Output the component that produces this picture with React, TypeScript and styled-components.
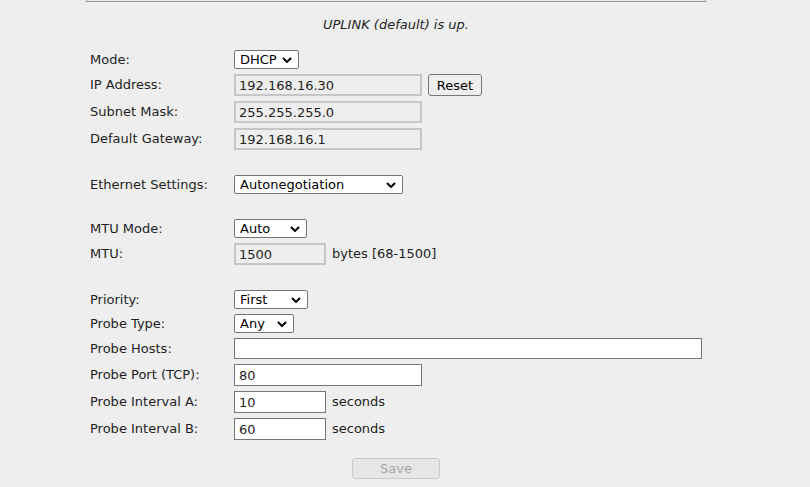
import React from 'react';
import styled, { createGlobalStyle } from 'styled-components';

const GlobalStyle = createGlobalStyle`
  html, body {
    margin: 0;
    padding: 0;
    background: #eeeeee;
  }
  body {
    font-family: 'DejaVu Sans', Verdana, sans-serif;
    font-size: 13px;
    color: #1e1e1e;
  }
`;

const Page = styled.div`
  width: 620px;
  margin-left: 86px;
`;

const TopEdge = styled.div`
  height: 1px;
  border: 1px solid #9a9a9a;
  border-top: none;
`;

const Status = styled.div`
  padding-top: 15px;
  line-height: 16px;
  text-align: center;
  font-style: italic;
`;

const Form = styled.form`
  margin-top: 17px;
  display: flex;
  flex-direction: column;
  gap: 25px;
`;

const Section = styled.div`
  display: grid;
  grid-template-columns: 144px 1fr;
  row-gap: 5px;
  align-items: center;
  padding-left: 4px;
`;

const Label = styled.label`
  line-height: 16px;
`;

const Controls = styled.div`
  display: flex;
  align-items: center;
  gap: 6px;
`;

const TextInput = styled.input<{ $w: number; $h?: number }>`
  box-sizing: border-box;
  width: ${(p) => p.$w}px;
  height: ${(p) => p.$h ?? 22}px;
  margin: 0;
  padding: 0 4px;
  font-family: 'DejaVu Sans', Verdana, sans-serif;
  font-size: 13px;
  color: #1e1e1e;
  background: #ffffff;
  border: 1px solid #767676;
  border-radius: 0;
  outline: none;

  &:disabled {
    padding: 0 3px;
    background: #eeeeee;
    border: 2px solid #c6c6c6;
    color: #1e1e1e;
    -webkit-text-fill-color: #1e1e1e;
  }
`;

const SelectWrap = styled.div<{ $w: number }>`
  position: relative;
  width: ${(p) => p.$w}px;
  height: 19px;
`;

const NativeSelect = styled.select`
  appearance: none;
  -webkit-appearance: none;
  box-sizing: border-box;
  width: 100%;
  height: 100%;
  margin: 0;
  padding: 0 20px 0 5px;
  font-family: 'DejaVu Sans', Verdana, sans-serif;
  font-size: 13px;
  color: #000;
  background: #ffffff;
  border: 1px solid #767676;
  border-radius: 2px;
  outline: none;
`;

const Chevron = styled.svg`
  position: absolute;
  right: 7px;
  top: 7px;
  pointer-events: none;
`;

const Button = styled.button<{ $w: number }>`
  box-sizing: border-box;
  width: ${(p) => p.$w}px;
  height: 22px;
  margin: 0;
  padding: 0;
  font-family: 'DejaVu Sans', Verdana, sans-serif;
  font-size: 13px;
  color: #000;
  background: #efefef;
  border: 1px solid #767676;
  border-radius: 3px;

  &:disabled {
    height: 21px;
    color: #a8a8a8;
    background: #e6e6e6;
    border-color: #c9c9c9;
  }
`;

const Unit = styled.span`
  line-height: 16px;
`;

const Footer = styled.div`
  display: flex;
  justify-content: center;
  margin-top: 18px;
`;

function Select({ width, value, options }: { width: number; value: string; options: string[] }) {
  return (
    <SelectWrap $w={width}>
      <NativeSelect defaultValue={value}>
        {options.map((o) => (
          <option key={o}>{o}</option>
        ))}
      </NativeSelect>
      <Chevron width="10" height="6" viewBox="0 0 10 6">
        <path d="M1 1 L5 5 L9 1" fill="none" stroke="#000" strokeWidth="2" />
      </Chevron>
    </SelectWrap>
  );
}

export default function App() {
  return (
    <>
      <GlobalStyle />
      <Page>
        <TopEdge />
        <Status>UPLINK (default) is up.</Status>
        <Form onSubmit={(e) => e.preventDefault()}>
          <Section>
            <Label>Mode:</Label>
            <Controls>
              <Select width={65} value="DHCP" options={['DHCP', 'Static']} />
            </Controls>
            <Label>IP Address:</Label>
            <Controls>
              <TextInput $w={188} defaultValue="192.168.16.30" disabled />
              <Button $w={54} type="button">Reset</Button>
            </Controls>
            <Label>Subnet Mask:</Label>
            <Controls>
              <TextInput $w={188} defaultValue="255.255.255.0" disabled />
            </Controls>
            <Label>Default Gateway:</Label>
            <Controls>
              <TextInput $w={188} defaultValue="192.168.16.1" disabled />
            </Controls>
          </Section>

          <Section>
            <Label>Ethernet Settings:</Label>
            <Controls>
              <Select
                width={169}
                value="Autonegotiation"
                options={['Autonegotiation', '100 Mbit/s Full Duplex', '10 Mbit/s Full Duplex']}
              />
            </Controls>
          </Section>

          <Section>
            <Label>MTU Mode:</Label>
            <Controls>
              <Select width={73} value="Auto" options={['Auto', 'Manual']} />
            </Controls>
            <Label>MTU:</Label>
            <Controls>
              <TextInput $w={92} defaultValue="1500" disabled />
              <Unit>bytes [68-1500]</Unit>
            </Controls>
          </Section>

          <Section>
            <Label>Priority:</Label>
            <Controls>
              <Select width={74} value="First" options={['First', 'Second', 'Third']} />
            </Controls>
            <Label>Probe Type:</Label>
            <Controls>
              <Select width={60} value="Any" options={['Any', 'All']} />
            </Controls>
            <Label>Probe Hosts:</Label>
            <Controls>
              <TextInput $w={468} $h={21} defaultValue="" />
            </Controls>
            <Label>Probe Port (TCP):</Label>
            <Controls>
              <TextInput $w={188} defaultValue="80" />
            </Controls>
            <Label>Probe Interval A:</Label>
            <Controls>
              <TextInput $w={92} defaultValue="10" />
              <Unit>seconds</Unit>
            </Controls>
            <Label>Probe Interval B:</Label>
            <Controls>
              <TextInput $w={92} defaultValue="60" />
              <Unit>seconds</Unit>
            </Controls>
          </Section>
        </Form>
        <Footer>
          <Button $w={88} type="submit" disabled>
            Save
          </Button>
        </Footer>
      </Page>
    </>
  );
}
